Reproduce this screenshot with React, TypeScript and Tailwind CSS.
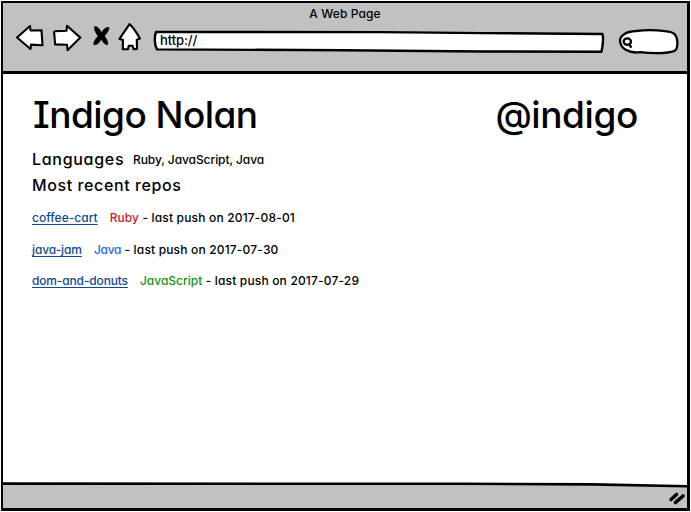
import type { ReactNode } from 'react';

const repos = [
  { name: 'coffee-cart', lang: 'Ruby', tone: 'text-[#c9211e] tracking-[0.1px]', link: 'tracking-[0.02px]', date: '2017-08-01' },
  { name: 'java-jam', lang: 'Java', tone: 'text-[#2a66dd] tracking-[-0.3px]', link: 'tracking-[-0.1px]', date: '2017-07-30' },
  { name: 'dom-and-donuts', lang: 'JavaScript', tone: 'text-[#129212]', link: 'tracking-[-0.15px]', date: '2017-07-29' },
];

function Sketch({ w, h, children, className = '' }: { w: number; h: number; children: ReactNode; className?: string }) {
  return (
    <svg
      width={w}
      height={h}
      viewBox={`0 0 ${w} ${h}`}
      className={`shrink-0 ${className}`}
      fill="white"
      stroke="black"
      strokeWidth="2.1"
      strokeLinejoin="round"
      strokeLinecap="round"
      aria-hidden="true"
    >
      {children}
    </svg>
  );
}

function Toolbar() {
  return (
    <div className="flex h-12 items-start pl-[12px]">
      <Sketch w={30} h={28} className="mt-[1.5px]">
        <path d="M2 13.5 15 2 15.5 6.5 26.5 6.2 27.5 21.3 16 20.6 15.5 25Z" />
      </Sketch>
      <Sketch w={30} h={28} className="ml-[8px] mt-[1.5px]">
        <path d="M1.1 8.2Q1.2 7.4 2.1 7.2L13.5 6.7 14 1.8 27.3 13.6 14.5 26.2 14 20.7 2.1 20.4 1.7 15Z" />
      </Sketch>
      <Sketch w={17} h={21} className="ml-[10px] mt-[4px]">
        <path
          fill="black"
          strokeWidth="0.7"
          d="M1.8.8Q4-.1 6.4 3.2L8.6 6.5Q11.4 1.2 16 1.3C16.4 3.6 14 7 11.4 10.1 13.5 12.8 15.4 16.2 14.6 18.6 12 19.1 9.9 16 8.2 13.1 6 17.2 3.6 19.4.8 18.6.4 16.1 2.4 13.2 5.2 10.1 2.8 7.1.6 3 1.8.8Z"
        />
      </Sketch>
      <Sketch w={24} h={28} className="ml-[8px] mt-px">
        <path d="M11.5 1.2C13.8 3 18.5 9.6 22 15.5L18.8 16.8 19 25.9 15.6 26.3 14.6 22.7 10.7 22.8 10 26.2 4.8 26.3 5 17 1.5 15.9Z" />
      </Sketch>
      <div className="relative ml-[10.5px] mt-[6.5px] h-6 w-[452px]">
        <Sketch w={452} h={24} className="absolute inset-0">
          <path strokeWidth="2.4" d="M3 3 230 3.1 330 4.1 449.5 5Q451 11 448.5 22.8L330 22.5 190 21.2 4 20.4C1.2 16 1.4 7 3 3Z" />
        </Sketch>
        <span className="relative ml-[7.5px] block text-[13px] leading-[23px] tracking-[-0.1px]">http://</span>
      </div>
      <Sketch w={62} h={28} className="ml-[13px] mt-[4.5px]">
        <path strokeWidth="2.3" d="M2 14C1.7 8.5 8 4.6 18 4 32 2.4 49 3.4 55 6 60.5 9 60.8 22 56 24.2 49 26.8 33 26.6 22 25.2 10 26.8 2.5 21 2 14Z" />
        <ellipse cx="9.3" cy="14.6" rx="3.7" ry="3.3" strokeWidth="2.3" />
        <path strokeWidth="2.6" d="m11.5 17.6 1.2 2" />
      </Sketch>
    </div>
  );
}

export default function App() {
  return (
    <div className="h-[512px] w-[691px] bg-white pb-px pl-px pr-px pt-px font-['Inter',sans-serif] font-medium text-black [font-feature-settings:'cv11','cv08']">
      <div className="flex h-[510px] flex-col border-[2.5px] border-b-[3px] border-r-[3px] border-black">
        <header className="h-[71px] shrink-0 border-b-[3px] border-black bg-[#c1c1c1]">
          <div className="h-[19px] pt-px text-center text-[12px] leading-5 tracking-[0.1px]">A Web Page</div>
          <Toolbar />
        </header>
        <main className="flex-1 pl-[29px] pr-[49px] pt-[17px]">
          <div className="flex h-[48px] justify-between whitespace-nowrap pl-px text-[37px] leading-[48px]">
            <h1 className="tracking-[-0.55px]">Indigo Nolan</h1>
            <span className="tracking-[-0.4px]">@indigo</span>
          </div>
          <div className="mt-[7px] flex h-[26px] items-center whitespace-nowrap">
            <h2 className="w-[101px] text-[16px] leading-[26px] tracking-[0.7px]">Languages</h2>
            <span className="pt-px text-[12px] leading-[26px] tracking-[-0.08px]">Ruby, JavaScript, Java</span>
          </div>
          <h2 className="text-[16px] leading-[26px] tracking-[0.6px]">Most recent repos</h2>
          <ul className="mt-[4px]">
            {repos.map((r) => (
              <li key={r.name} className="flex h-[31.7px] items-center whitespace-pre text-[12px]">
                <a className={`mr-3 text-[#104a8c] underline decoration-1 underline-offset-2 [text-decoration-skip-ink:none] ${r.link}`}>{r.name}</a>
                <span className={r.tone}>{r.lang}</span>
                <span className="tracking-[0.17px]"> - last push on {r.date}</span>
              </li>
            ))}
          </ul>
        </main>
        <footer className="relative h-[25px] shrink-0 bg-[#c1c1c1]">
          <svg className="absolute -top-px left-0 w-full" height="26" viewBox="0 0 685 26" preserveAspectRatio="none" aria-hidden="true">
            <path d="M0 0H685V4L460 1.5H0Z" fill="white" />
            <path d="M0 1.6 460 1.8 590 2.4 685 4.3" fill="none" stroke="black" strokeWidth="2.6" />
            <path d="m669 17.5 5.5-5M673.5 20.5l7.5-6.5" stroke="black" strokeWidth="3.6" strokeLinecap="round" />
          </svg>
        </footer>
      </div>
    </div>
  );
}
